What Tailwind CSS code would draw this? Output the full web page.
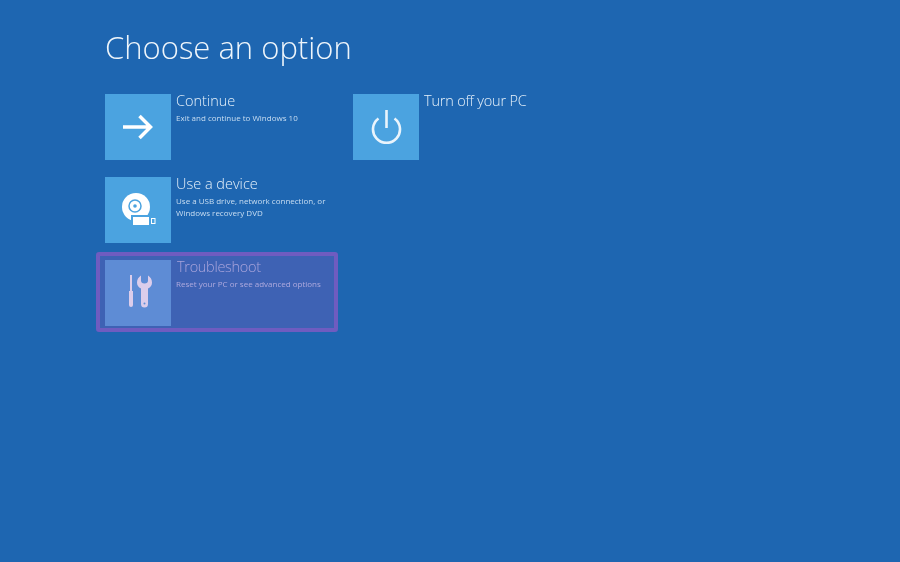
<!DOCTYPE html>
<html lang="en">
<head>
    <meta charset="UTF-8">
    <meta name="viewport" content="width=device-width, initial-scale=1.0">
    <script src="https://cdn.jsdelivr.net/npm/@tailwindcss/browser@4"></script>
    <title>Choose an option</title>
</head>
<body class="bg-[#1e66b1] overflow-hidden">
    <main class="h-[562px] w-[900px] pl-[105px] pt-[27px] text-white font-['Open_Sans',sans-serif] blur-[0.5px]">
        <h1 class="text-[31px] leading-[40px] font-light text-[#eef5fb]">Choose an option</h1>

        <div class="mt-[27px] grid grid-cols-[248px_248px] auto-rows-[83px]">
            <!-- continue -->
            <div class="flex gap-[5px]">
                <div class="size-[66px] bg-[#4ba3e0] flex items-center justify-center">
                    <svg class="size-[34px]" viewBox="0 0 34 34" fill="none" stroke="#fff" stroke-width="3.5">
                        <path d="M2 17H29M18.500 6L29.500 17L18.500 28"/>
                    </svg>
                </div>
                <div class="-mt-[1px]">
                    <h2 class="text-[14.5px] leading-[16px] font-light text-[#e6f1fa]">Continue</h2>
                    <p class="mt-[3px] text-[8px] leading-[12px] text-[#c9def2]">Exit and continue to Windows 10</p>
                </div>
            </div>

            <!-- turn off -->
            <div class="flex gap-[5px]">
                <div class="size-[66px] bg-[#4ba3e0] flex items-center justify-center">
                    <svg class="size-[34px]" viewBox="0 0 34 34" fill="none" stroke="#e9f4fc" stroke-width="2.6">
                        <path d="M17.500 0V18"/>
                        <path d="M9.500 8.500A13.500 13.500 0 1 0 25.500 8.500"/>
                    </svg>
                </div>
                <h2 class="-mt-[1px] text-[14.5px] leading-[16px] tracking-[-0.2px] font-light text-[#e6f1fa]">Turn off your PC</h2>
            </div>

            <!-- use a device -->
            <div class="flex gap-[5px] col-start-1">
                <div class="size-[66px] bg-[#4ba3e0] flex items-center justify-center">
                    <svg class="size-[40px]" viewBox="0 0 40 40">
                        <circle cx="18" cy="17" r="14" fill="#fff"/>
                        <circle cx="17" cy="16" r="6" fill="none" stroke="#4ba3e0" stroke-width="1.500"/>
                        <circle cx="17" cy="16" r="1.800" fill="#4ba3e0"/>
                        <rect x="13" y="25" width="26" height="12" fill="#4ba3e0"/>
                        <rect x="15" y="27" width="16" height="8" fill="#fff"/>
                        <rect x="33.500" y="28.500" width="3.500" height="5" fill="none" stroke="#fff" stroke-width="1"/>
                    </svg>
                </div>
                <div class="-mt-[1px]">
                    <h2 class="text-[14.5px] leading-[16px] font-light text-[#e6f1fa]">Use a device</h2>
                    <p class="mt-[3px] text-[8px] leading-[12px] text-[#c9def2]">Use a USB drive, network connection, or<br>Windows recovery DVD</p>
                </div>
            </div>

            <!-- troubleshoot, has the focus box over it -->
            <div class="relative flex gap-[5px] col-start-1">
                <div class="size-[66px] bg-[#4ba3e0] flex items-center justify-center">
                    <svg class="size-[40px]" viewBox="0 0 40 40" fill="#fff">
                        <path d="M12 2H14V18H12Z"/>
                        <path d="M11 18H15V32Q15 34 13 34Q11 34 11 32Z"/>
                        <path d="M23 2.500V7.500Q23 10.500 26.500 10.500Q30 10.500 30 7.500V2.500Q34 5 34 9.500Q34 13.500 30 15.500V31Q30 34.500 26.500 34.500Q23 34.500 23 31V15.500Q19 13.500 19 9.500Q19 5 23 2.500Z"/>
                        <circle cx="26.500" cy="30.500" r="1" fill="#4ba3e0"/>
                    </svg>
                </div>
                <div class="-mt-[1px]">
                    <h2 class="ml-px text-[14.5px] leading-[16px] tracking-[-0.3px] font-light text-[#b5c4e8]">Troubleshoot</h2>
                    <p class="mt-[3px] text-[8px] leading-[12px] text-[#bccbeb]">Reset your PC or see advanced options</p>
                </div>
                <div class="absolute left-[-9px] top-[-8px] w-[242px] h-[80px] rounded-[3px] border-[4px] border-[#6f5cc0] bg-[#8c58be]/30"></div>
            </div>
        </div>
    </main>
</body>
</html>
